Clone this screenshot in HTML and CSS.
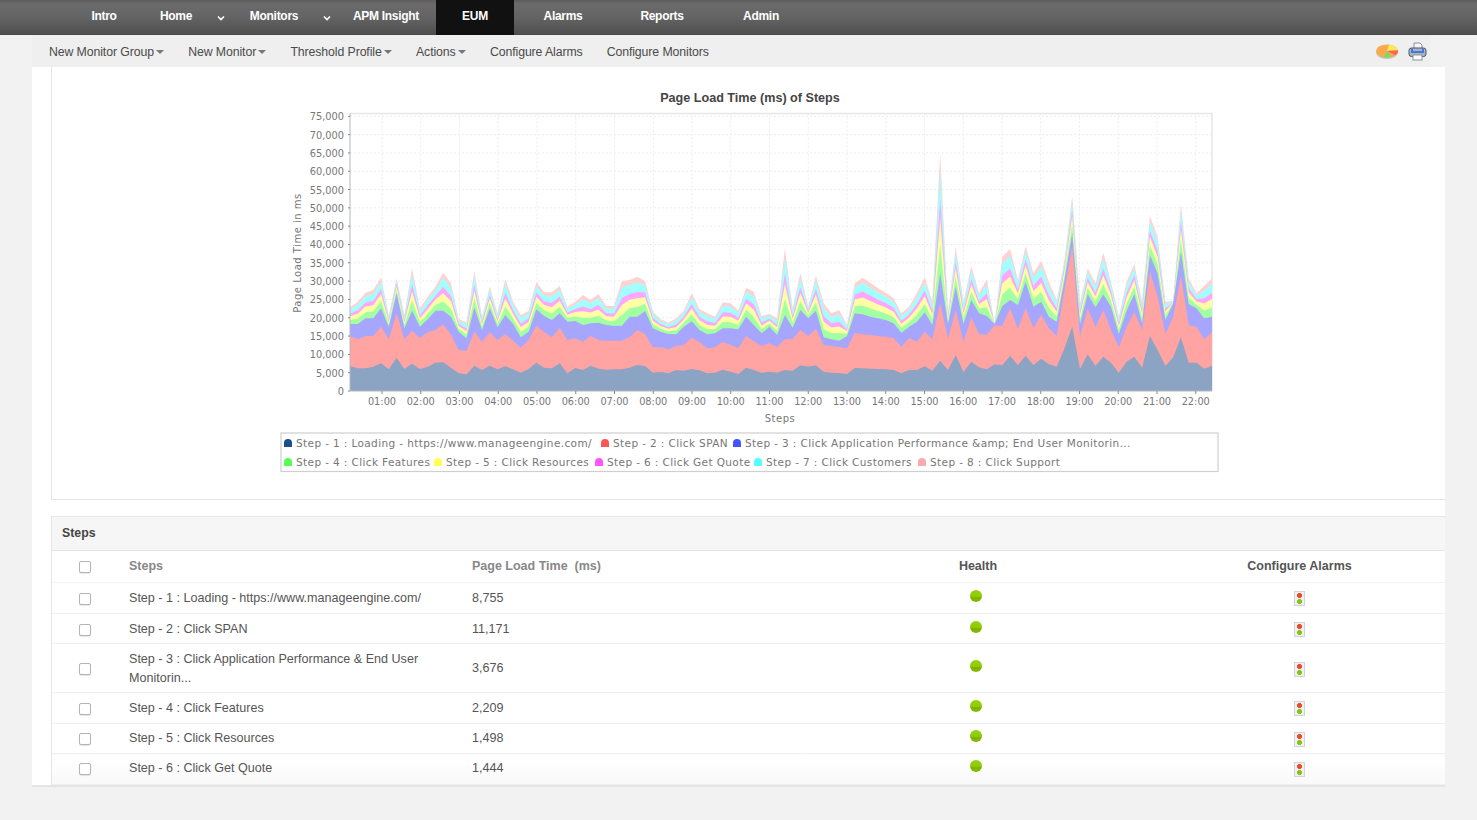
FILE: index.html
```html
<!DOCTYPE html>
<html lang="en">
<head>
    <meta charset="UTF-8">
    <title>Page Load Time of Steps</title>
    <link rel="stylesheet" href="styles.css">
</head>
<body>
    <nav class="top-nav">
        <a class="nav-item">Intro</a>
        <a class="nav-item">Home</a>
        <span class="nav-chevron"><svg width="8" height="6" viewBox="0 0 8 6"><path d="M1 1.5 L4 4.5 L7 1.5" fill="none" stroke="#fff" stroke-width="1.6"/></svg></span>
        <a class="nav-item">Monitors</a>
        <span class="nav-chevron"><svg width="8" height="6" viewBox="0 0 8 6"><path d="M1 1.5 L4 4.5 L7 1.5" fill="none" stroke="#fff" stroke-width="1.6"/></svg></span>
        <a class="nav-item">APM Insight</a>
        <a class="nav-item active">EUM</a>
        <a class="nav-item">Alarms</a>
        <a class="nav-item">Reports</a>
        <a class="nav-item">Admin</a>
    </nav>

    <div class="sub-nav">
        <a class="sub-item caret">New Monitor Group</a>
        <a class="sub-item caret">New Monitor</a>
        <a class="sub-item caret">Threshold Profile</a>
        <a class="sub-item caret">Actions</a>
        <a class="sub-item">Configure Alarms</a>
        <a class="sub-item">Configure Monitors</a>
        <div class="sub-icons">
            <svg width="22" height="15" viewBox="0 0 22 15">
                <ellipse cx="11" cy="8" rx="11" ry="7" fill="#c4c0b8"/>
                <ellipse cx="11" cy="7" rx="11" ry="6.6" fill="#f9ab4c"/>
                <path d="M11 7 L13 0.5 Q20 1 22 6 Z" fill="#fbe75c"/>
                <path d="M11 7 L22 6.5 Q22 10 19 11 Z" fill="#f9645a"/>
                <path d="M11 7 L15 13 Q11 14 8 13 Z" fill="#6ce06a"/>
            </svg>
            <svg width="19" height="19" viewBox="0 0 19 19">
                <path d="M6 1 H12 L14 3 V9 H6 Z" fill="#f4f6f8" stroke="#8b919b" stroke-width="1"/>
                <rect x="1" y="6" width="17" height="8.5" rx="2.5" fill="#aeb4bd" stroke="#4e545f" stroke-width="1"/>
                <path d="M4 6.5 V10 H15 V6.5" fill="none" stroke="#3f76ea" stroke-width="2"/>
                <rect x="5" y="13" width="9" height="5" fill="#fff" stroke="#8b919b" stroke-width="1"/>
            </svg>
        </div>
    </div>

    <main class="panel">
        <section class="chart-box">
            <svg id="chart" class="chart" width="1393" height="432" viewBox="52 67 1393 432">
                <text class="chart-title" x="750" y="102">Page Load Time (ms) of Steps</text>
                <text class="axis-name" x="0" y="0" transform="translate(301 253) rotate(-90)">Page Load Time in ms</text>
                <text class="axis-name" x="780" y="422">Steps</text>

                <g id="grid"></g>
                <g id="bands"></g>
                <g id="ticks"></g>

                <rect class="legend-box" x="281" y="433" width="937" height="38.5"/>
                <path fill="#1f4e8c" d="M284 447 v-4 a4 4 0 0 1 8 0 v4 z"/>
                <text class="legend-text" x="296" y="447">Step - 1 : Loading - https://www.manageengine.com/</text>
                <path fill="#ff5555" d="M601 447 v-4 a4 4 0 0 1 8 0 v4 z"/>
                <text class="legend-text" x="613" y="447">Step - 2 : Click SPAN</text>
                <path fill="#4455ff" d="M733 447 v-4 a4 4 0 0 1 8 0 v4 z"/>
                <text class="legend-text" x="745" y="447">Step - 3 : Click Application Performance &amp;amp; End User Monitorin...</text>
                <path fill="#55ff55" d="M284 466 v-4 a4 4 0 0 1 8 0 v4 z"/>
                <text class="legend-text" x="296" y="466">Step - 4 : Click Features</text>
                <path fill="#ffff55" d="M434 466 v-4 a4 4 0 0 1 8 0 v4 z"/>
                <text class="legend-text" x="446" y="466">Step - 5 : Click Resources</text>
                <path fill="#ff55ff" d="M595 466 v-4 a4 4 0 0 1 8 0 v4 z"/>
                <text class="legend-text" x="607" y="466">Step - 6 : Click Get Quote</text>
                <path fill="#55ffff" d="M754 466 v-4 a4 4 0 0 1 8 0 v4 z"/>
                <text class="legend-text" x="766" y="466">Step - 7 : Click Customers</text>
                <path fill="#ffaaaa" d="M918 466 v-4 a4 4 0 0 1 8 0 v4 z"/>
                <text class="legend-text" x="930" y="466">Step - 8 : Click Support</text>
            </svg>
        </section>

        <section class="steps-box">
            <h3 class="steps-title">Steps</h3>
            <table class="steps-table">
                <thead>
                    <tr>
                        <th class="col-check"><input type="checkbox"></th>
                        <th class="col-name muted">Steps</th>
                        <th class="col-time muted">Page Load Time &nbsp;(ms)</th>
                        <th class="col-health">Health</th>
                        <th class="col-alarm">Configure Alarms</th>
                    </tr>
                </thead>
                <tbody>
                    <tr class="row-tall">
                        <td class="col-check"><input type="checkbox"></td>
                        <td>Step - 1 : Loading - https://www.manageengine.com/</td>
                        <td>8,755</td>
                        <td class="col-health"><span class="health-dot"></span></td>
                        <td class="col-alarm"><span class="alarm-icon"></span></td>
                    </tr>
                    <tr class="row-low">
                        <td class="col-check"><input type="checkbox"></td>
                        <td>Step - 2 : Click SPAN</td>
                        <td>11,171</td>
                        <td class="col-health"><span class="health-dot"></span></td>
                        <td class="col-alarm"><span class="alarm-icon"></span></td>
                    </tr>
                    <tr class="row-double">
                        <td class="col-check"><input type="checkbox"></td>
                        <td>Step - 3 : Click Application Performance &amp; End User Monitorin...</td>
                        <td>3,676</td>
                        <td class="col-health"><span class="health-dot"></span></td>
                        <td class="col-alarm"><span class="alarm-icon"></span></td>
                    </tr>
                    <tr class="row-tall">
                        <td class="col-check"><input type="checkbox"></td>
                        <td>Step - 4 : Click Features</td>
                        <td>2,209</td>
                        <td class="col-health"><span class="health-dot"></span></td>
                        <td class="col-alarm"><span class="alarm-icon"></span></td>
                    </tr>
                    <tr>
                        <td class="col-check"><input type="checkbox"></td>
                        <td>Step - 5 : Click Resources</td>
                        <td>1,498</td>
                        <td class="col-health"><span class="health-dot"></span></td>
                        <td class="col-alarm"><span class="alarm-icon"></span></td>
                    </tr>
                    <tr class="row-last">
                        <td class="col-check"><input type="checkbox"></td>
                        <td>Step - 6 : Click Get Quote</td>
                        <td>1,444</td>
                        <td class="col-health"><span class="health-dot"></span></td>
                        <td class="col-alarm"><span class="alarm-icon"></span></td>
                    </tr>
                </tbody>
            </table>
        </section>
    </main>

    <script src="chart.js"></script>
</body>
</html>
```

FILE: styles.css
```css
body {
    font-family: "Liberation Sans", Arial, sans-serif;
    margin: 0;
    height: 820px;
    overflow: hidden;
    background-color: #f2f2f2;
    color: #555;
}
.top-nav {
    display: grid;
    grid-template-columns: 74px 70px 19px 88px 18px 100px 78px 98px 100px 98px;
    height: 35px;
    padding-left: 67px;
    background: linear-gradient(#5c5c5c 0, #6b6b6b 4px, #636363 18px, #4f4f4f 34px, #444 35px);
}
.nav-item {
    display: flex;
    justify-content: center;
    align-items: center;
    height: 32px;
    font-size: 12px;
    font-weight: bold;
    letter-spacing: -0.3px;
    color: #fff;
}
.nav-item.active {
    height: 35px;
    padding-bottom: 3px;
    box-sizing: border-box;
    background-color: #111;
}
.nav-chevron {
    display: flex;
    justify-content: center;
    align-items: center;
    height: 35px;
}
.sub-nav {
    display: flex;
    align-items: center;
    gap: 24px;
    height: 32px;
    margin: 0 46px 0 32px;
    padding: 1px 4px 0 17px;
    box-sizing: border-box;
    background-color: #efefef;
}
.sub-item {
    font-size: 12.3px;
    letter-spacing: -0.1px;
    color: #4a4a4a;
}
.caret::after {
    content: "";
    display: inline-block;
    margin-left: 2.3px;
    vertical-align: 2px;
    border-top: 4px solid #777;
    border-left: 4px solid transparent;
    border-right: 4px solid transparent;
}
.sub-icons {
    display: flex;
    align-items: center;
    gap: 10px;
    margin-left: auto;
}
.panel {
    height: 718px;
    margin: 0 32px;
    background-color: #fff;
    border-bottom: 2px solid #e4e4e4;
}
.chart-box {
    height: 432px;
    margin-left: 19px;
    border-left: 1px solid #e6e6e6;
    border-bottom: 1px solid #e6e6e6;
}
.chart {
    display: block;
}
.chart-title {
    font-size: 12.6px;
    font-weight: bold;
    fill: #444;
    text-anchor: middle;
}
.axis-name {
    font-family: "DejaVu Sans", sans-serif;
    font-size: 10px;
    letter-spacing: 0.5px;
    fill: #777;
    text-anchor: middle;
}
.tick-label {
    font-family: "DejaVu Sans", sans-serif;
    font-size: 9.8px;
    fill: #777;
}
.legend-box {
    fill: #fff;
    stroke: #cfcfcf;
    stroke-width: 1.2;
}
.legend-text {
    font-family: "DejaVu Sans", sans-serif;
    font-size: 10.5px;
    letter-spacing: 0.38px;
    fill: #777;
}
.steps-box {
    margin: 16px 0 0 19px;
    border-left: 1px solid #e6e6e6;
}
.steps-title {
    height: 33px;
    margin: 0;
    padding-left: 10px;
    font-size: 12.3px;
    line-height: 33px;
    color: #444;
    background-color: #f6f6f6;
    border-top: 1px solid #e6e6e6;
    border-bottom: 1px solid #e6e6e6;
}
.steps-table {
    width: 1393px;
    table-layout: fixed;
    border-collapse: collapse;
    font-size: 12.57px;
    line-height: 19px;
}
.steps-table th {
    height: 31px;
    padding: 0;
    font-size: 12.5px;
    text-align: left;
    color: #555;
    border-bottom: 1px solid #f3f3f3;
}
.steps-table td {
    height: 29px;
    padding: 0 30px 0 0;
    border-bottom: 1px solid #f0f0f0;
}
.steps-table .row-tall td {
    height: 30px;
}
.steps-table .row-low td {
    height: 28px;
    padding-top: 1px;
}
.steps-table .row-double td {
    height: 47px;
    padding-top: 1px;
}
.steps-table .row-last td {
    height: 29px;
    padding-bottom: 1px;
    background: linear-gradient(#fff, #f9f9f9);
}
.steps-table .muted {
    color: #888;
}
.steps-table .col-check {
    width: 77px;
    padding-left: 27px;
    padding-right: 0;
    box-sizing: border-box;
}
.steps-table .col-name {
    width: 343px;
}
.steps-table .col-time {
    width: 330px;
}
.steps-table .col-health {
    padding-right: 0;
    text-align: center;
}
.steps-table .col-alarm {
    width: 291px;
    padding-right: 0;
    text-align: center;
}
input[type="checkbox"] {
    appearance: none;
    display: block;
    width: 12px;
    height: 12px;
    margin: 1px 0 0;
    background-color: #fff;
    border: 1px solid #b4b4b4;
    border-radius: 2px;
    box-shadow: 0 1px 1px rgba(0,0,0,0.1);
}
.health-dot {
    display: inline-block;
    width: 12px;
    height: 12px;
    margin: 0 4px 5px 0;
    vertical-align: middle;
    border-radius: 50%;
    background: linear-gradient(#95d10c 0, #8ecb05 55%, #7db000 60%, #86bd02 100%);
}
.alarm-icon {
    display: inline-block;
    width: 9px;
    height: 13px;
    margin-top: 1px;
    vertical-align: middle;
    border: 1px solid #d4d4d4;
    background:
        radial-gradient(circle at 4.5px 3.5px, #ee4a2a 2.2px, transparent 2.7px),
        radial-gradient(circle at 4.5px 9.5px, #86c418 2.2px, transparent 2.7px),
        #f0f0f0;
}
```

FILE: chart.js
```js
// y of each band's top edge, in thirds of a pixel below y=100
const blueTop = [
    798,805,805,800,790,808,773,807,791,807,800,788,787,803,820,823,797,810,797,808,
    799,808,818,807,788,803,805,790,820,804,810,797,806,809,808,808,803,795,798,818,
    816,820,810,812,807,811,820,818,809,815,822,803,810,818,815,818,810,812,796,800,
    796,815,818,819,822,804,805,806,807,808,810,820,810,810,799,812,782,810,765,816,
    785,802,808,793,796,767,796,767,795,776,793,800,745,680,806,763,798,770,788,818,
    785,770,803,708,750,798,772,712,788,788,806,797
];
const redTop = [
    708,718,708,708,680,718,640,718,692,714,697,690,673,704,750,753,695,725,697,720,
    702,722,743,720,677,696,712,683,720,715,725,708,720,722,722,722,712,690,702,742,
    741,748,738,735,713,727,745,742,726,734,745,707,724,738,730,741,718,717,690,708,
    686,736,738,741,745,699,703,705,708,710,714,740,715,725,695,718,608,716,630,725,
    652,702,704,676,678,625,688,625,684,645,685,708,570,440,710,625,682,630,690,742,
    680,637,690,515,590,702,650,528,676,680,718,697
];
const purpleTop = [
    672,672,655,655,625,680,580,685,632,680,658,632,632,650,695,715,622,690,625,682,
    645,672,712,695,628,648,660,640,665,663,675,670,668,675,678,677,650,650,633,685,
    695,702,703,680,664,690,703,700,685,685,688,650,675,700,680,705,645,683,630,655,
    632,712,718,722,708,640,643,650,655,660,670,698,680,665,637,675,520,672,560,672,
    600,640,648,672,618,600,615,545,620,605,650,665,540,400,672,582,622,583,620,702,
    632,582,670,465,520,660,610,455,612,625,655,650
];
const totalTop = [
    622,605,578,570,532,648,535,645,505,625,590,560,518,550,658,667,513,650,560,640,
    537,605,645,632,547,577,577,558,620,605,585,600,582,618,618,543,540,530,543,635,
    658,668,655,632,580,627,640,650,607,610,632,563,575,648,642,655,445,625,520,620,
    527,610,640,630,675,550,533,548,565,578,595,640,620,580,532,605,160,640,440,605,
    498,580,538,672,470,447,540,438,520,483,545,600,480,288,610,505,550,458,545,650,
    545,492,605,348,410,605,603,312,535,580,558,535
];

const plotLeft = 350;
const plotRight = 1212;
const plotTop = 113.5;
const plotBottom = 391;
const stepX = (plotRight - plotLeft) / 111;
const svgNS = 'http://www.w3.org/2000/svg';

function addEl(parent, name, attrs, text) {
    const el = document.createElementNS(svgNS, name);
    for (const key in attrs) {
        el.setAttribute(key, attrs[key]);
    }
    if (text) {
        el.textContent = text;
    }
    parent.appendChild(el);
}

function pointsFor(tops) {
    let pts = plotLeft + ',' + plotBottom;
    tops.forEach(function(top, i) {
        pts += ' ' + (plotLeft + i * stepX).toFixed(1) + ',' + (100 + top / 3).toFixed(1);
    });
    return pts + ' ' + plotRight + ',' + plotBottom;
}

// the five thin bands on top share the space between purple and the total
function thinBand(share) {
    return purpleTop.map(function(top, i) {
        return top + (totalTop[i] - top) * share;
    });
}

function drawBands() {
    const bands = document.getElementById('bands');
    addEl(bands, 'polygon', { points: pointsFor(totalTop), fill: '#ffd2d2' });
    addEl(bands, 'polygon', { points: pointsFor(thinBand(0.86)), fill: '#a3ffff' });
    addEl(bands, 'polygon', { points: pointsFor(thinBand(0.62)), fill: '#ffa6ff' });
    addEl(bands, 'polygon', { points: pointsFor(thinBand(0.46)), fill: '#ffffa3' });
    addEl(bands, 'polygon', { points: pointsFor(thinBand(0.24)), fill: '#a3ffa3' });
    addEl(bands, 'polygon', { points: pointsFor(purpleTop), fill: '#a6a6ff' });
    addEl(bands, 'polygon', { points: pointsFor(redTop), fill: '#ffa3a3' });
    addEl(bands, 'polygon', { points: pointsFor(blueTop), fill: '#8ba4c3' });
}

function drawAxes() {
    const grid = document.getElementById('grid');
    const ticks = document.getElementById('ticks');

    addEl(grid, 'path', {
        d: 'M' + plotLeft + ' ' + plotTop + ' H' + plotRight + ' V' + plotBottom,
        fill: 'none',
        stroke: '#e6e6e6',
        'stroke-width': 1.5
    });
    addEl(ticks, 'path', {
        d: 'M' + plotLeft + ' ' + plotTop + ' V' + plotBottom + ' H' + plotRight,
        fill: 'none',
        stroke: '#b8b8b8',
        'stroke-width': 1
    });

    for (let v = 0; v <= 75000; v += 5000) {
        const y = plotBottom - v * 274.7 / 75000;
        if (v > 0) {
            addEl(grid, 'line', {
                x1: plotLeft, x2: plotRight, y1: y, y2: y,
                stroke: '#ececec', 'stroke-dasharray': '2 2'
            });
        }
        addEl(ticks, 'line', { x1: plotLeft - 2, x2: plotLeft, y1: y, y2: y, stroke: '#888' });
        addEl(ticks, 'text', { class: 'tick-label', x: 344, y: y + 4, 'text-anchor': 'end' },
            v === 0 ? '0' : v.toLocaleString('en-US'));
    }

    for (let h = 1; h <= 22; h++) {
        const x = 382 + (h - 1) * 38.75;
        addEl(grid, 'line', {
            x1: x, x2: x, y1: plotTop, y2: plotBottom,
            stroke: '#ececec', 'stroke-dasharray': '2 2'
        });
        addEl(ticks, 'line', { x1: x, x2: x, y1: plotBottom, y2: plotBottom + 3, stroke: '#888' });
        addEl(ticks, 'text', { class: 'tick-label', x: x, y: 405, 'text-anchor': 'middle' },
            (h < 10 ? '0' + h : h) + ':00');
    }
}

drawAxes();
drawBands();
```
